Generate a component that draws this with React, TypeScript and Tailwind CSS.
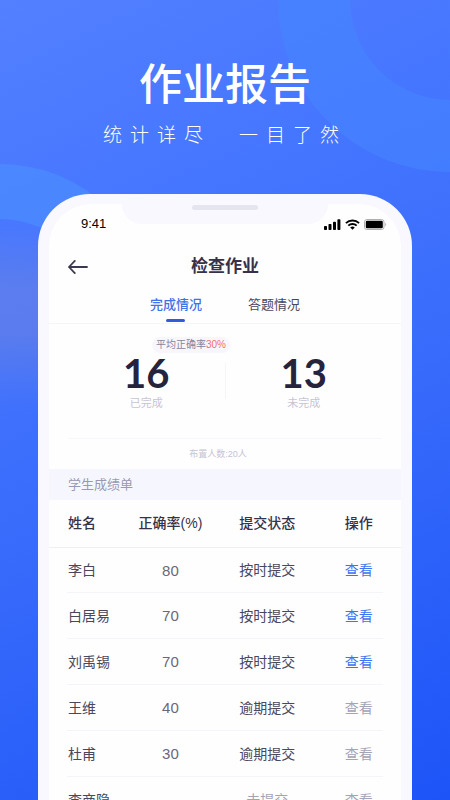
const CJK = "font-['Liberation_Sans','Noto_Sans_CJK_SC',sans-serif]";

type Row = {
  name: string;
  rate: string;
  status: string;
  active: boolean;
  muted?: boolean;
};

const rows: Row[] = [
  { name: "李白", rate: "80", status: "按时提交", active: true },
  { name: "白居易", rate: "70", status: "按时提交", active: true },
  { name: "刘禹锡", rate: "70", status: "按时提交", active: true },
  { name: "王维", rate: "40", status: "逾期提交", active: false },
  { name: "杜甫", rate: "30", status: "逾期提交", active: false },
  { name: "李商隐", rate: "", status: "未提交", active: false, muted: true },
];

function Backdrop() {
  return (
    <>
      {/* Ring, top right */}
      <div className="absolute -top-[172px] -right-[172px] size-[344px] rounded-full border-[72px] border-[#4585ff]/60" />
      {/* Ring, left edge */}
      <div className="absolute top-[164px] -left-[155px] size-[310px] rounded-full border-[55px] border-[#4c8dff]/70 border-b-transparent" />
      {/* Soft shade beside the phone */}
      <div className="absolute top-[220px] left-0 h-[190px] w-[38px] bg-[linear-gradient(to_bottom,transparent,#7c88d6_35%,#7c88d6_60%,transparent)] opacity-40" />
    </>
  );
}

function StatusIcons() {
  return (
    <div className="flex items-center gap-1">
      <svg width="17" height="11" viewBox="0 0 17 11" fill="#000">
        <rect x="0" y="7" width="3" height="4" rx="0.8" />
        <rect x="4.5" y="5" width="3" height="6" rx="0.8" />
        <rect x="9" y="2.7" width="3" height="8.3" rx="0.8" />
        <rect x="13.4" y="0.3" width="3" height="10.7" rx="0.8" />
      </svg>
      <svg width="15" height="11" viewBox="0 0 15 11" fill="none" stroke="#000" strokeWidth="1.8">
        <path d="M0.9 4.2a9.4 9.4 0 0 1 13.2 0" />
        <path d="M3.3 6.7a6 6 0 0 1 8.4 0" />
        <path d="M7.5 10.8 5.2 8.5a3.3 3.3 0 0 1 4.6 0z" fill="#000" stroke="none" />
      </svg>
      <svg width="23" height="11" viewBox="0 0 23 11">
        <rect x="0.5" y="0.5" width="19.5" height="10" rx="2.4" fill="none" stroke="#b0b0b0" />
        <rect x="1.8" y="1.8" width="17" height="7.4" rx="1.2" fill="#000" />
        <path d="M21.3 3.8v3.4c1.2-.4 1.2-3 0-3.4z" fill="#a8a8a8" />
      </svg>
    </div>
  );
}

function Stat({ value, label, rate }: { value: string; label: string; rate?: string }) {
  return (
    <div className="relative flex flex-1 flex-col items-center pt-7">
      {rate && (
        <div className="absolute top-[13px] left-[84px] flex h-4 w-[78px] items-center justify-center rounded-full bg-[#f7f6fd] text-[10px] leading-4 whitespace-nowrap text-[#87849f]">
          平均正确率<span className="text-[#f0706f]">{rate}</span>
        </div>
      )}
      <div className="font-['Lato',sans-serif] text-[40px] leading-[43px] font-bold text-[#26243d]">
        {value}
      </div>
      <div className="text-[11px] leading-4 text-[#c6c4d3]">{label}</div>
    </div>
  );
}

function ScoreTable() {
  return (
    <table className="w-full table-fixed border-collapse text-center text-[14px] text-[#4a475c]">
      <colgroup>
        <col className="w-[21%]" />
        <col className="w-[27%]" />
        <col className="w-[28%]" />
        <col className="w-[24%]" />
      </colgroup>
      <thead>
        <tr className="h-[47px] border-b border-[#f0eff7] text-[#35324a]">
          <th className="pl-[19px] text-left font-medium">姓名</th>
          <th className="font-medium">正确率(%)</th>
          <th className="font-medium">提交状态</th>
          <th className="font-medium">操作</th>
        </tr>
      </thead>
      <tbody>
        {rows.map((row) => (
          <tr
            key={row.name}
            className="h-[46px] bg-[linear-gradient(#f5f4fa,#f5f4fa)] bg-[length:90%_1px] bg-bottom bg-no-repeat *:pt-px"
          >
            <td className="pl-[19px] text-left whitespace-nowrap">{row.name}</td>
            <td className="text-[15px] text-[#6a6878]">{row.rate}</td>
            <td className={row.muted ? "text-[#a5a3b3]" : ""}>{row.status}</td>
            <td>
              <a href="#" className={row.active ? "text-[#3f74ee]" : "text-[#a5a3b6]"}>
                查看
              </a>
            </td>
          </tr>
        ))}
      </tbody>
    </table>
  );
}

export default function App() {
  return (
    <div
      className={`relative flex h-screen flex-col overflow-hidden bg-[linear-gradient(155deg,#5380ff_0%,#4475ff_30%,#386bfb_55%,#1d54f8_100%)] ${CJK}`}
    >
      <Backdrop />

      <header className="relative pt-[54px] text-center text-white">
        <h1 className="text-[43px] leading-[62px] font-medium">作业报告</h1>
        <p className="mt-1 flex justify-center gap-7 text-[19px] leading-8 font-light tracking-[8px]">
          <span>统计详尽</span>
          <span>一目了然</span>
        </p>
      </header>

      <main className="relative mx-[38px] mt-[42px] flex-1 rounded-t-[52px] bg-[#f8f8fe] px-[11px] pt-[10px]">
        {/* Notch */}
        <div className="absolute inset-x-[84px] top-0 flex h-[30px] justify-center rounded-b-[20px] bg-[#f8f8fe] pt-[11px]">
          <div className="h-[5px] w-[66px] rounded-full bg-[#e5e5f0]" />
        </div>

        <div className="rounded-t-[42px] bg-[#fefeff]">
          <div className="flex h-10 items-center justify-between pr-[14px] pl-8">
            <span className="text-[13px] font-medium text-black">9:41</span>
            <StatusIcons />
          </div>

          <div className="grid h-[46px] grid-cols-[1fr_auto_1fr] items-center px-[19px]">
            <button type="button" aria-label="返回" className="justify-self-start">
              <svg
                width="20"
                height="16"
                viewBox="0 0 20 16"
                fill="none"
                stroke="#3c394e"
                strokeWidth="1.8"
                strokeLinecap="round"
                strokeLinejoin="round"
              >
                <path d="M19 8H1M6.8 1.9 1 8l5.8 6.1" />
              </svg>
            </button>
            <h2 className="text-[17px] font-bold text-[#35324a]">检查作业</h2>
          </div>

          <nav className="flex h-[34px] justify-center gap-[46px] border-b border-[#f4f4fb] text-[13px] leading-[29px]">
            <button type="button" className="flex flex-col items-center font-medium text-[#3f72e8]">
              完成情况
              <span className="h-[3px] w-[19px] rounded-full bg-[#2d5cdf]" />
            </button>
            <button type="button" className="flex flex-col items-center text-[#4a475c]">
              答题情况
            </button>
          </nav>

          <section className="px-[19px]">
            <div className="flex h-[115px] border-b border-[#f7f6fb]">
              <Stat value="16" label="已完成" rate="30%" />
              <div className="mt-[39px] h-[36px] w-px bg-[#f5f4fa]" />
              <Stat value="13" label="未完成" />
            </div>
            <p className="pr-[14px] text-center text-[9px] leading-[30px] text-[#c6c4d3]">
              布置人数:20人
            </p>
          </section>

          <h3 className="bg-[#f6f7fe] px-[19px] text-[13px] leading-[31px] text-[#9a98b2]">
            学生成绩单
          </h3>
          <ScoreTable />
        </div>
      </main>
    </div>
  );
}
